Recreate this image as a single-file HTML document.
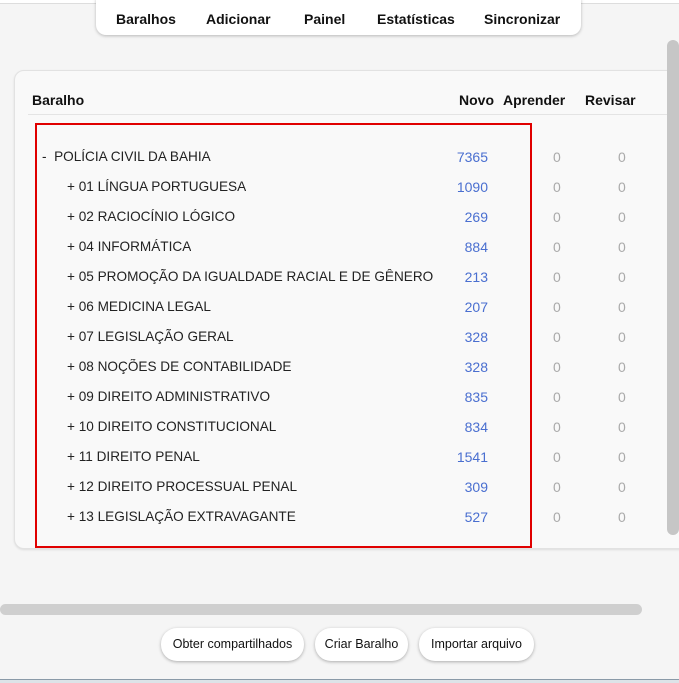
<!DOCTYPE html>
<html><head><meta charset="utf-8"><style>
body{margin:0;width:679px;height:682px;background:#f5f5f5;font-family:"Liberation Sans",sans-serif;position:relative;overflow:hidden;color:#111}
.abs{position:absolute}
.nav{left:96px;top:-2px;width:485px;height:37px;background:#fff;border-radius:0 0 10px 10px;box-shadow:0 1px 3px rgba(0,0,0,.25)}
.nav span{position:absolute;top:13px;font-weight:bold;font-size:14px}
.card{left:14px;top:70px;width:680px;height:477px;background:#f9f9f9;border:1px solid #e2e2e2;border-radius:10px;box-shadow:0 1px 2px rgba(0,0,0,.1)}
.h{top:92px;font-weight:bold;font-size:14px}
.row{position:absolute;left:0;width:679px;height:30px;font-size:14px}
.row .n{position:absolute;top:0;white-space:nowrap;overflow:hidden;font-size:13.6px;color:#222}
.row .v{position:absolute;right:191px;top:0;color:#4a6fd0}
.row .a{position:absolute;left:553px;top:0;color:#aaa}
.row .r{position:absolute;left:618px;top:0;color:#aaa}
.btn{top:628px;height:33px;background:#fff;border-radius:16px;box-shadow:0 1px 3px rgba(0,0,0,.3);font-size:12.5px;line-height:33px;text-align:center}
</style></head><body>
<div class="abs" style="left:0;top:0;width:679px;height:3px;background:#fff;border-bottom:1px solid #ddd"></div>
<div class="abs nav">
<span style="left:20px">Baralhos</span><span style="left:110px">Adicionar</span><span style="left:208px">Painel</span><span style="left:281px">Estatísticas</span><span style="left:388px">Sincronizar</span>
</div>
<div class="abs card"></div>
<div class="abs h" style="left:32px">Baralho</div>
<div class="abs h" style="left:459px">Novo</div>
<div class="abs h" style="left:503px">Aprender</div>
<div class="abs h" style="left:585px">Revisar</div>
<div class="abs" style="left:28px;top:114px;width:640px;height:1px;background:#e4e4e4"></div>
<div class="abs" style="left:35px;top:123px;width:493px;height:421px;border:2px solid #e00000"></div>

<div class="row" style="top:149px"><div class="n" style="left:42px">-&nbsp;&nbsp;POLÍCIA CIVIL DA BAHIA</div><div class="v">7365</div><div class="a">0</div><div class="r">0</div></div>
<div class="row" style="top:179px"><div class="n" style="left:67px">+ 01 LÍNGUA PORTUGUESA</div><div class="v">1090</div><div class="a">0</div><div class="r">0</div></div>
<div class="row" style="top:209px"><div class="n" style="left:67px">+ 02 RACIOCÍNIO LÓGICO</div><div class="v">269</div><div class="a">0</div><div class="r">0</div></div>
<div class="row" style="top:239px"><div class="n" style="left:67px">+ 04 INFORMÁTICA</div><div class="v">884</div><div class="a">0</div><div class="r">0</div></div>
<div class="row" style="top:269px"><div class="n" style="left:67px;width:368px">+ 05 PROMOÇÃO DA IGUALDADE RACIAL E DE GÊNERO</div><div class="v">213</div><div class="a">0</div><div class="r">0</div></div>
<div class="row" style="top:299px"><div class="n" style="left:67px">+ 06 MEDICINA LEGAL</div><div class="v">207</div><div class="a">0</div><div class="r">0</div></div>
<div class="row" style="top:329px"><div class="n" style="left:67px">+ 07 LEGISLAÇÃO GERAL</div><div class="v">328</div><div class="a">0</div><div class="r">0</div></div>
<div class="row" style="top:359px"><div class="n" style="left:67px">+ 08 NOÇÕES DE CONTABILIDADE</div><div class="v">328</div><div class="a">0</div><div class="r">0</div></div>
<div class="row" style="top:389px"><div class="n" style="left:67px">+ 09 DIREITO ADMINISTRATIVO</div><div class="v">835</div><div class="a">0</div><div class="r">0</div></div>
<div class="row" style="top:419px"><div class="n" style="left:67px">+ 10 DIREITO CONSTITUCIONAL</div><div class="v">834</div><div class="a">0</div><div class="r">0</div></div>
<div class="row" style="top:449px"><div class="n" style="left:67px">+ 11 DIREITO PENAL</div><div class="v">1541</div><div class="a">0</div><div class="r">0</div></div>
<div class="row" style="top:479px"><div class="n" style="left:67px">+ 12 DIREITO PROCESSUAL PENAL</div><div class="v">309</div><div class="a">0</div><div class="r">0</div></div>
<div class="row" style="top:509px"><div class="n" style="left:67px">+ 13 LEGISLAÇÃO EXTRAVAGANTE</div><div class="v">527</div><div class="a">0</div><div class="r">0</div></div>

<div class="abs" style="left:667px;top:40px;width:12px;height:495px;background:#c6c6c6;border-radius:6px"></div>
<div class="abs" style="left:0;top:604px;width:642px;height:11px;background:#cfcfcf;border-radius:6px"></div>
<div class="abs btn" style="left:161px;width:143px">Obter compartilhados</div>
<div class="abs btn" style="left:315px;width:93px">Criar Baralho</div>
<div class="abs btn" style="left:419px;width:115px">Importar arquivo</div>
<div class="abs" style="left:0;top:679px;width:679px;height:3px;background:#dde3e8;border-top:1px solid #8a9aa8"></div>
</body></html>
